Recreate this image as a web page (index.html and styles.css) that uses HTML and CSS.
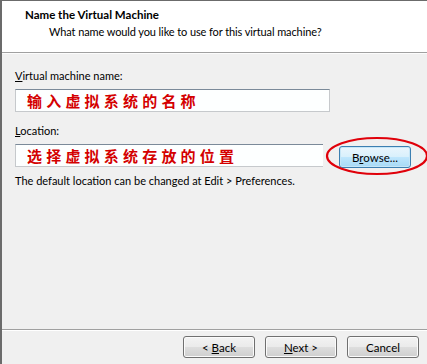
FILE: index.html
```html
<!DOCTYPE html>
<html lang="en">
<head>
    <meta charset="UTF-8">
    <title>New Virtual Machine Wizard</title>
    <link rel="stylesheet" href="styles.css">
</head>
<body>
    <div class="wizard">
        <div class="header">
            <div class="title">Name the Virtual Machine</div>
            <div class="subtitle">What name would you like to use for this virtual machine?</div>
        </div>

        <div class="content">
            <label class="label"><u>V</u>irtual machine name:</label>
            <div class="field name-field">
                <span class="note">输入虚拟系统的名称</span>
            </div>

            <label class="label location-label"><u>L</u>ocation:</label>
            <div class="location-row">
                <div class="field loc-field">
                    <span class="note">选择虚拟系统存放的位置</span>
                </div>
                <button class="btn browse">B<u>r</u>owse...</button>
                <svg class="circle" width="104" height="40" viewBox="0 0 104 40">
                    <ellipse cx="52" cy="20" rx="50" ry="18" fill="none" stroke="#e0000a" stroke-width="2.2"/>
                </svg>
            </div>
            <p class="hint">The default location can be changed at Edit &gt; Preferences.</p>
        </div>

        <div class="footer">
            <button class="btn">&lt; <u>B</u>ack</button>
            <button class="btn"><u>N</u>ext &gt;</button>
            <button class="btn">Cancel</button>
        </div>
    </div>
</body>
</html>
```

FILE: styles.css
```css
* {
    margin: 0;
    padding: 0;
    box-sizing: border-box;
}

body {
    font-family: Lato, 'Segoe UI', sans-serif;
    font-size: 11px;
    color: #000;
    background: #f0f0f0;
    width: 427px;
    height: 364px;
    overflow: hidden;
}

.wizard {
    height: 364px;
    display: flex;
    flex-direction: column;
    border-left: 2px solid #6b6b6b;
    border-top: 1px solid #6b6b6b;
}

.header {
    background: #fff;
    height: 52px;
    border-bottom: 1px solid #a0a0a0;
    padding: 6px 0 0 23px;
    line-height: 16px;
}

.title {
    font-size: 11.5px;
    font-weight: bold;
}

.subtitle {
    padding-left: 24px;
    margin-top: 1px;
    letter-spacing: -0.1px;
}

.content {
    flex: 1;
    padding: 14px 0 0 13px;
    border-top: 1px solid #fcfcfc;
}

.label {
    display: block;
    line-height: 16px;
}

.field {
    height: 23px;
    background: #fdffff;
    border: 1px solid #c6c9cc;
    border-top-color: #7b8a99;
    margin-top: 5px;
    padding-left: 11px;
    line-height: 21px;
}

.name-field {
    width: 315px;
}

.note {
    font-family: 'Noto Sans CJK SC', sans-serif;
    font-weight: 700;
    font-size: 15px;
    letter-spacing: 4.2px;
    color: #d40000;
}

.location-label {
    margin-top: 11px;
}

.location-row {
    position: relative;
    display: flex;
    align-items: flex-start;
    gap: 16px;
    margin-top: 5px;
}

.location-row .field {
    margin-top: 0;
}

.loc-field {
    width: 308px;
    border-right: none;
}

.btn {
    width: 72px;
    height: 22px;
    font-family: inherit;
    font-size: 11.5px;
    color: #000;
    border: 1px solid #707070;
    border-radius: 3px;
    background: linear-gradient(#f3f3f3 0%, #ebebeb 48%, #dddddd 52%, #cfcfcf 100%);
    box-shadow: inset 0 0 0 1px #fbfbfb;
}

.browse {
    margin-top: 2px;
    border-color: #3c7fb1;
    background: linear-gradient(#eaf6fd 0%, #d9f0fc 48%, #bee6fd 52%, #a7d9f5 100%);
    box-shadow: inset 0 0 0 1px #c6e6f7;
}

.circle {
    position: absolute;
    left: 310px;
    top: -8px;
}

.hint {
    margin-top: 5px;
    line-height: 16px;
}

.footer {
    height: 35px;
    border-top: 1px solid #a0a0a0;
    display: flex;
    justify-content: flex-end;
    align-items: center;
    gap: 10px;
    padding-right: 8px;
    box-shadow: inset 0 1px 0 #fff;
}
```
